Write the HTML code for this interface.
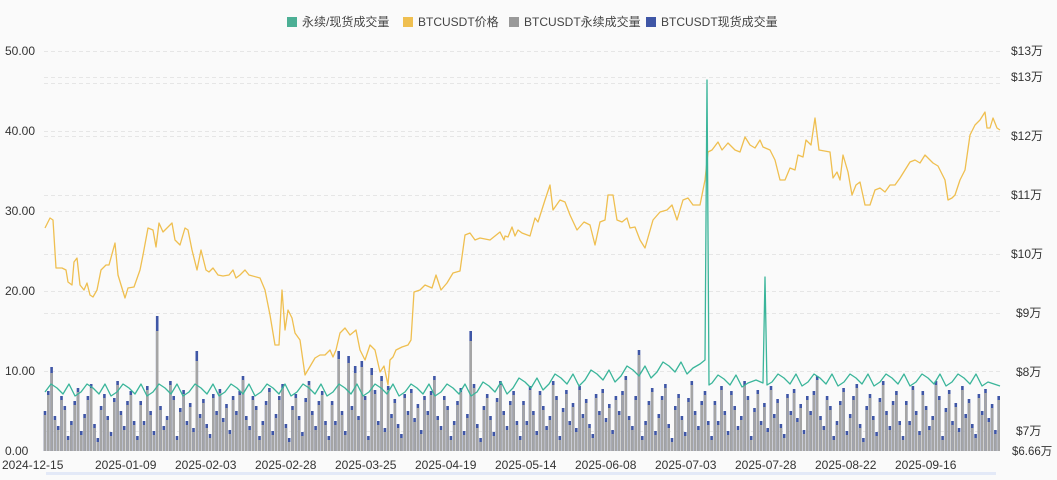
<!DOCTYPE html>
<html><head><meta charset="utf-8"><style>
html,body{margin:0;padding:0;background:#fafafa;}
body{width:1057px;height:475px;overflow:hidden;}
svg text{font-family:"Liberation Sans","Noto Sans CJK SC",sans-serif;}
</style></head><body>
<svg width="1057" height="475" xmlns="http://www.w3.org/2000/svg">
<rect width="1057" height="475" fill="#fafafa"/>
<g stroke="#e6e6e6" stroke-dasharray="4,3" stroke-width="1">
<line x1="44" x2="1002" y1="51.5" y2="51.5"/><line x1="44" x2="1002" y1="77.5" y2="77.5"/><line x1="44" x2="1002" y1="83.5" y2="83.5"/>
<line x1="44" x2="1002" y1="131.5" y2="131.5"/><line x1="44" x2="1002" y1="136.5" y2="136.5"/><line x1="44" x2="1002" y1="195.5" y2="195.5"/>
<line x1="44" x2="1002" y1="211.5" y2="211.5"/><line x1="44" x2="1002" y1="254.5" y2="254.5"/><line x1="44" x2="1002" y1="291.5" y2="291.5"/>
<line x1="44" x2="1002" y1="313.5" y2="313.5"/><line x1="44" x2="1002" y1="371.5" y2="371.5"/><line x1="44" x2="1002" y1="431.5" y2="431.5"/>
</g>
<path fill="none" stroke="#3f56a6" stroke-width="2.6" d="M45,451 v-40 m3.3,40 v-60 m3.3,60 v-84 m3.3,84 v-35 m3.3,35 v-25 m3.3,25 v-55 m3.3,55 v-45 m3.3,45 v-15 m3.3,15 v-30 m3.3,30 v-50 m3.3,50 v-63 m3.3,63 v-20 m3.3,20 v-37 m3.3,37 v-55 m3.3,55 v-67 m3.3,67 v-27 m3.3,27 v-13 m3.3,13 v-45 m3.3,45 v-57 m3.3,57 v-35 m3.3,35 v-19 m3.3,19 v-53 m3.3,53 v-70 m3.3,70 v-40 m3.3,40 v-25 m3.3,25 v-50 m3.3,50 v-60 m3.3,60 v-30 m3.3,30 v-15 m3.3,15
v-50 m3.3,50 v-30 m3.3,30 v-65 m3.3,65 v-40 m3.3,40 v-20 m3.3,20 v-135 m3.3,135 v-45 m3.3,45 v-25 m3.3,25 v-35 m3.3,35 v-70 m3.3,70 v-55 m3.3,55 v-15 m3.3,15 v-43 m3.3,43 v-61 m3.3,61 v-30 m3.3,30 v-48 m3.3,48 v-23 m3.3,23 v-100 m3.3,100 v-37 m3.3,37 v-52 m3.3,52 v-27 m3.3,27 v-17 m3.3,17 v-57 m3.3,57 v-40 m3.3,40 v-62 m3.3,62 v-33 m3.3,33 v-47 m3.3,47 v-21 m3.3,21 v-55 m3.3,55
v-40 m3.3,40 v-60 m3.3,60 v-75 m3.3,75 v-35 m3.3,35 v-25 m3.3,25 v-55 m3.3,55 v-45 m3.3,45 v-15 m3.3,15 v-30 m3.3,30 v-50 m3.3,50 v-63 m3.3,63 v-20 m3.3,20 v-37 m3.3,37 v-55 m3.3,55 v-67 m3.3,67 v-27 m3.3,27 v-13 m3.3,13 v-45 m3.3,45 v-57 m3.3,57 v-35 m3.3,35 v-19 m3.3,19 v-53 m3.3,53 v-70 m3.3,70 v-40 m3.3,40 v-25 m3.3,25 v-50 m3.3,50 v-60 m3.3,60 v-30 m3.3,30 v-15 m3.3,15
v-50 m3.3,50 v-30 m3.3,30 v-100 m3.3,100 v-40 m3.3,40 v-20 m3.3,20 v-95 m3.3,95 v-45 m3.3,45 v-85 m3.3,85 v-35 m3.3,35 v-90 m3.3,90 v-55 m3.3,55 v-15 m3.3,15 v-83 m3.3,83 v-61 m3.3,61 v-30 m3.3,30 v-75 m3.3,75 v-23 m3.3,23 v-65 m3.3,65 v-37 m3.3,37 v-52 m3.3,52 v-27 m3.3,27 v-17 m3.3,17 v-57 m3.3,57 v-40 m3.3,40 v-62 m3.3,62 v-33 m3.3,33 v-47 m3.3,47 v-21 m3.3,21 v-55 m3.3,55
v-40 m3.3,40 v-60 m3.3,60 v-75 m3.3,75 v-35 m3.3,35 v-25 m3.3,25 v-55 m3.3,55 v-45 m3.3,45 v-15 m3.3,15 v-30 m3.3,30 v-50 m3.3,50 v-63 m3.3,63 v-20 m3.3,20 v-37 m3.3,37 v-120 m3.3,120 v-67 m3.3,67 v-27 m3.3,27 v-13 m3.3,13 v-45 m3.3,45 v-57 m3.3,57 v-35 m3.3,35 v-19 m3.3,19 v-53 m3.3,53 v-70 m3.3,70 v-40 m3.3,40 v-25 m3.3,25 v-50 m3.3,50 v-60 m3.3,60 v-30 m3.3,30 v-15 m3.3,15
v-50 m3.3,50 v-30 m3.3,30 v-65 m3.3,65 v-40 m3.3,40 v-20 m3.3,20 v-60 m3.3,60 v-45 m3.3,45 v-25 m3.3,25 v-35 m3.3,35 v-70 m3.3,70 v-55 m3.3,55 v-15 m3.3,15 v-43 m3.3,43 v-61 m3.3,61 v-30 m3.3,30 v-48 m3.3,48 v-23 m3.3,23 v-65 m3.3,65 v-37 m3.3,37 v-52 m3.3,52 v-27 m3.3,27 v-17 m3.3,17 v-57 m3.3,57 v-40 m3.3,40 v-62 m3.3,62 v-33 m3.3,33 v-47 m3.3,47 v-21 m3.3,21 v-55 m3.3,55
v-40 m3.3,40 v-60 m3.3,60 v-75 m3.3,75 v-35 m3.3,35 v-25 m3.3,25 v-55 m3.3,55 v-101 m3.3,101 v-15 m3.3,15 v-30 m3.3,30 v-50 m3.3,50 v-63 m3.3,63 v-20 m3.3,20 v-37 m3.3,37 v-55 m3.3,55 v-67 m3.3,67 v-27 m3.3,27 v-13 m3.3,13 v-45 m3.3,45 v-57 m3.3,57 v-35 m3.3,35 v-19 m3.3,19 v-53 m3.3,53 v-70 m3.3,70 v-40 m3.3,40 v-25 m3.3,25 v-50 m3.3,50 v-60 m3.3,60 v-30 m3.3,30 v-15 m3.3,15
v-50 m3.3,50 v-30 m3.3,30 v-65 m3.3,65 v-40 m3.3,40 v-20 m3.3,20 v-60 m3.3,60 v-45 m3.3,45 v-25 m3.3,25 v-35 m3.3,35 v-70 m3.3,70 v-55 m3.3,55 v-15 m3.3,15 v-43 m3.3,43 v-61 m3.3,61 v-30 m3.3,30 v-48 m3.3,48 v-23 m3.3,23 v-65 m3.3,65 v-37 m3.3,37 v-52 m3.3,52 v-27 m3.3,27 v-17 m3.3,17 v-57 m3.3,57 v-40 m3.3,40 v-62 m3.3,62 v-33 m3.3,33 v-47 m3.3,47 v-21 m3.3,21 v-55 m3.3,55
v-40 m3.3,40 v-60 m3.3,60 v-75 m3.3,75 v-35 m3.3,35 v-25 m3.3,25 v-55 m3.3,55 v-45 m3.3,45 v-15 m3.3,15 v-30 m3.3,30 v-50 m3.3,50 v-63 m3.3,63 v-20 m3.3,20 v-37 m3.3,37 v-55 m3.3,55 v-67 m3.3,67 v-27 m3.3,27 v-13 m3.3,13 v-45 m3.3,45 v-57 m3.3,57 v-35 m3.3,35 v-19 m3.3,19 v-53 m3.3,53 v-70 m3.3,70 v-40 m3.3,40 v-25 m3.3,25 v-50 m3.3,50 v-60 m3.3,60 v-30 m3.3,30 v-15 m3.3,15
v-50 m3.3,50 v-30 m3.3,30 v-65 m3.3,65 v-40 m3.3,40 v-20 m3.3,20 v-60 m3.3,60 v-45 m3.3,45 v-25 m3.3,25 v-35 m3.3,35 v-70 m3.3,70 v-55 m3.3,55 v-15 m3.3,15 v-43 m3.3,43 v-61 m3.3,61 v-30 m3.3,30 v-48 m3.3,48 v-23 m3.3,23 v-65 m3.3,65 v-37 m3.3,37 v-52 m3.3,52 v-27 m3.3,27 v-17 m3.3,17 v-57 m3.3,57 v-40 m3.3,40 v-62 m3.3,62 v-33 m3.3,33 v-47 m3.3,47 v-21 m3.3,21 v-55 m3.3,55"/>
<path fill="none" stroke="#a5a5a5" stroke-width="2.6" d="M45,451 v-36 m3.3,36 v-56 m3.3,56 v-78 m3.3,78 v-31 m3.3,31 v-21 m3.3,21 v-51 m3.3,51 v-41 m3.3,41 v-11 m3.3,11 v-26 m3.3,26 v-46 m3.3,46 v-59 m3.3,59 v-16 m3.3,16 v-33 m3.3,33 v-51 m3.3,51 v-63 m3.3,63 v-23 m3.3,23 v-9 m3.3,9 v-41 m3.3,41 v-53 m3.3,53 v-31 m3.3,31 v-15 m3.3,15 v-49 m3.3,49 v-66 m3.3,66 v-36 m3.3,36 v-21 m3.3,21 v-46 m3.3,46 v-56 m3.3,56 v-26 m3.3,26 v-11 m3.3,11
v-46 m3.3,46 v-26 m3.3,26 v-61 m3.3,61 v-36 m3.3,36 v-16 m3.3,16 v-120 m3.3,120 v-41 m3.3,41 v-21 m3.3,21 v-31 m3.3,31 v-66 m3.3,66 v-51 m3.3,51 v-11 m3.3,11 v-39 m3.3,39 v-57 m3.3,57 v-26 m3.3,26 v-44 m3.3,44 v-19 m3.3,19 v-90 m3.3,90 v-33 m3.3,33 v-48 m3.3,48 v-23 m3.3,23 v-13 m3.3,13 v-53 m3.3,53 v-36 m3.3,36 v-58 m3.3,58 v-29 m3.3,29 v-43 m3.3,43 v-17 m3.3,17 v-51 m3.3,51
v-36 m3.3,36 v-56 m3.3,56 v-71 m3.3,71 v-31 m3.3,31 v-21 m3.3,21 v-51 m3.3,51 v-41 m3.3,41 v-11 m3.3,11 v-26 m3.3,26 v-46 m3.3,46 v-59 m3.3,59 v-16 m3.3,16 v-33 m3.3,33 v-51 m3.3,51 v-63 m3.3,63 v-23 m3.3,23 v-9 m3.3,9 v-41 m3.3,41 v-53 m3.3,53 v-31 m3.3,31 v-15 m3.3,15 v-49 m3.3,49 v-66 m3.3,66 v-36 m3.3,36 v-21 m3.3,21 v-46 m3.3,46 v-56 m3.3,56 v-26 m3.3,26 v-11 m3.3,11
v-46 m3.3,46 v-26 m3.3,26 v-92 m3.3,92 v-36 m3.3,36 v-16 m3.3,16 v-88 m3.3,88 v-41 m3.3,41 v-78 m3.3,78 v-31 m3.3,31 v-84 m3.3,84 v-51 m3.3,51 v-11 m3.3,11 v-76 m3.3,76 v-57 m3.3,57 v-26 m3.3,26 v-70 m3.3,70 v-19 m3.3,19 v-61 m3.3,61 v-33 m3.3,33 v-48 m3.3,48 v-23 m3.3,23 v-13 m3.3,13 v-53 m3.3,53 v-36 m3.3,36 v-58 m3.3,58 v-29 m3.3,29 v-43 m3.3,43 v-17 m3.3,17 v-51 m3.3,51
v-36 m3.3,36 v-56 m3.3,56 v-71 m3.3,71 v-31 m3.3,31 v-21 m3.3,21 v-51 m3.3,51 v-41 m3.3,41 v-11 m3.3,11 v-26 m3.3,26 v-46 m3.3,46 v-59 m3.3,59 v-16 m3.3,16 v-33 m3.3,33 v-110 m3.3,110 v-63 m3.3,63 v-23 m3.3,23 v-9 m3.3,9 v-41 m3.3,41 v-53 m3.3,53 v-31 m3.3,31 v-15 m3.3,15 v-49 m3.3,49 v-66 m3.3,66 v-36 m3.3,36 v-21 m3.3,21 v-46 m3.3,46 v-56 m3.3,56 v-26 m3.3,26 v-11 m3.3,11
v-46 m3.3,46 v-26 m3.3,26 v-61 m3.3,61 v-36 m3.3,36 v-16 m3.3,16 v-56 m3.3,56 v-41 m3.3,41 v-21 m3.3,21 v-31 m3.3,31 v-66 m3.3,66 v-51 m3.3,51 v-11 m3.3,11 v-39 m3.3,39 v-57 m3.3,57 v-26 m3.3,26 v-44 m3.3,44 v-19 m3.3,19 v-61 m3.3,61 v-33 m3.3,33 v-48 m3.3,48 v-23 m3.3,23 v-13 m3.3,13 v-53 m3.3,53 v-36 m3.3,36 v-58 m3.3,58 v-29 m3.3,29 v-43 m3.3,43 v-17 m3.3,17 v-51 m3.3,51
v-36 m3.3,36 v-56 m3.3,56 v-71 m3.3,71 v-31 m3.3,31 v-21 m3.3,21 v-51 m3.3,51 v-96 m3.3,96 v-11 m3.3,11 v-26 m3.3,26 v-46 m3.3,46 v-59 m3.3,59 v-16 m3.3,16 v-33 m3.3,33 v-51 m3.3,51 v-63 m3.3,63 v-23 m3.3,23 v-9 m3.3,9 v-41 m3.3,41 v-53 m3.3,53 v-31 m3.3,31 v-15 m3.3,15 v-49 m3.3,49 v-66 m3.3,66 v-36 m3.3,36 v-21 m3.3,21 v-46 m3.3,46 v-56 m3.3,56 v-26 m3.3,26 v-11 m3.3,11
v-46 m3.3,46 v-26 m3.3,26 v-61 m3.3,61 v-36 m3.3,36 v-16 m3.3,16 v-56 m3.3,56 v-41 m3.3,41 v-21 m3.3,21 v-31 m3.3,31 v-66 m3.3,66 v-51 m3.3,51 v-11 m3.3,11 v-39 m3.3,39 v-57 m3.3,57 v-26 m3.3,26 v-44 m3.3,44 v-19 m3.3,19 v-61 m3.3,61 v-33 m3.3,33 v-48 m3.3,48 v-23 m3.3,23 v-13 m3.3,13 v-53 m3.3,53 v-36 m3.3,36 v-58 m3.3,58 v-29 m3.3,29 v-43 m3.3,43 v-17 m3.3,17 v-51 m3.3,51
v-36 m3.3,36 v-56 m3.3,56 v-71 m3.3,71 v-31 m3.3,31 v-21 m3.3,21 v-51 m3.3,51 v-41 m3.3,41 v-11 m3.3,11 v-26 m3.3,26 v-46 m3.3,46 v-59 m3.3,59 v-16 m3.3,16 v-33 m3.3,33 v-51 m3.3,51 v-63 m3.3,63 v-23 m3.3,23 v-9 m3.3,9 v-41 m3.3,41 v-53 m3.3,53 v-31 m3.3,31 v-15 m3.3,15 v-49 m3.3,49 v-66 m3.3,66 v-36 m3.3,36 v-21 m3.3,21 v-46 m3.3,46 v-56 m3.3,56 v-26 m3.3,26 v-11 m3.3,11
v-46 m3.3,46 v-26 m3.3,26 v-61 m3.3,61 v-36 m3.3,36 v-16 m3.3,16 v-56 m3.3,56 v-41 m3.3,41 v-21 m3.3,21 v-31 m3.3,31 v-66 m3.3,66 v-51 m3.3,51 v-11 m3.3,11 v-39 m3.3,39 v-57 m3.3,57 v-26 m3.3,26 v-44 m3.3,44 v-19 m3.3,19 v-61 m3.3,61 v-33 m3.3,33 v-48 m3.3,48 v-23 m3.3,23 v-13 m3.3,13 v-53 m3.3,53 v-36 m3.3,36 v-58 m3.3,58 v-29 m3.3,29 v-43 m3.3,43 v-17 m3.3,17 v-51 m3.3,51"/>
<path fill="none" stroke="#efbf50" stroke-width="1.3" stroke-linejoin="round" d="M45,228 L50,218 L53,220 L56,268 L62,268 L66,270 L68,282 L72,285 L74,262 L77,258 L80,285 L84,290 L87,283 L90,295 L93,297 L97,290 L101,270 L106,265 L109,265 L115,243 L118,275 L125,298 L128,288 L134,287 L140,270 L143,255 L148,228 L153,230 L156,247 L159,223 L163,232 L167,228 L172,223 L175,240 L180,245 L185,228 L188,230 L192,250 L197,270 L201,250 L206,270 L209,272 L213,268 L218,275 L223,276 L229,275 L233,270 L236,278 L240,275 L245,270 L249,275 L260,278 L265,290 L270,315 L275,345 L279,345 L282,290 L285,330 L288,310 L292,318 L295,333 L300,340 L305,375 L315,358 L320,355 L325,355 L330,350 L333,357 L336,350 L340,333 L345,328 L350,335 L356,330 L360,350 L365,360 L370,345 L375,350 L380,372 L384,366 L388,385 L390,360 L393,357 L396,350 L402,347 L408,345 L411,340 L414,292 L420,290 L425,285 L432,288 L436,275 L441,290 L447,283 L453,273 L460,271 L465,235 L470,233 L475,240 L480,238 L490,240 L500,232 L504,240 L505,236 L508,237 L512,227 L515,236 L518,230 L522,233 L530,236 L535,218 L538,222 L545,200 L550,185 L553,210 L560,200 L565,202 L570,215 L577,230 L584,222 L590,225 L595,245 L600,222 L605,220 L608,195 L613,195 L617,220 L622,222 L627,218 L630,228 L635,227 L640,240 L645,248 L653,220 L660,212 L667,210 L672,205 L677,220 L683,200 L688,198 L693,205 L700,205 L705,180 L708,152 L712,150 L718,142 L722,150 L728,143 L735,150 L740,152 L745,137 L750,145 L755,148 L760,140 L763,147 L770,150 L775,160 L780,180 L785,180 L790,168 L795,170 L798,155 L803,157 L806,140 L811,145 L815,118 L819,150 L830,152 L833,178 L837,172 L840,180 L843,155 L848,172 L852,195 L856,185 L860,182 L865,205 L870,205 L875,190 L880,188 L885,192 L890,185 L895,185 L900,178 L905,170 L910,162 L915,160 L920,163 L925,155 L930,160 L933,163 L938,166 L945,180 L948,200 L952,198 L955,195 L960,180 L965,170 L970,135 L975,125 L980,120 L985,112 L987,128 L990,128 L993,118 L997,128 L1000,130"/>
<path fill="none" stroke="#3ab59a" stroke-width="1.3" stroke-linejoin="round" d="M45,392 l6,-8 l6,4 l6,6 l6,-10 l6,12 l6,-4 l6,-8 l6,4 l6,6 l6,-10 l6,12 l6,-4 l6,-8 l6,4 l6,6 l6,-10 l6,12 l6,-4 l6,-8 l6,4 l6,6 l6,-10 l6,12 l6,-4 l6,-8 l6,4 l6,6 l6,-10 l6,12 l6,-4 l6,-8 l6,4 l6,6 l6,-10 l6,12 l6,-4 l6,-8 l6,4 l6,6 l6,-10 l6,12 l6,-4 l6,-8 l6,4 l6,6 l6,-10 l6,12 l6,-4 l6,-8 l6,4 l6,6 l6,-10 l6,12 l6,-4 l6,-8 l6,4 l6,6 l6,-10 l6,12 l6,-4 l6,-8 l6,4 l6,6 l6,-10 l6,12 l6,-4 l6,-8 l6,4 l6,6 l6,-10 l6,12 l6,-4 l6,-10 l6,4 l6,6 l6,-10 l6,12 l6,-6 l6,-10 l6,4 l6,6 l6,-10 l6,12 l6,-6 l6,-10 l6,4 l6,6 l6,-10 l6,12 l6,-6 l6,-10 l6,4 l6,6 l6,-10 l6,12 l6,-6 l6,-10 l6,4 l6,6 l6,-10 l6,12 l6,-6 l6,-10 l6,4 l6,6 l6,-10 l6,12 l6,-6 L700,364 L705,360 L707,80 L709,385 L712,383 l6,-8 l6,4 l6,6 l6,-10 l6,12 l6,-4 L756,380 L763,383 L765,277 L767,385 L772,382 l6,-8 l6,4 l6,6 l6,-10 l6,12 l6,-4 l6,-8 l6,4 l6,6 l6,-10 l6,12 l6,-4 l6,-8 l6,4 l6,6 l6,-10 l6,12 l6,-4 l6,-8 l6,4 l6,6 l6,-10 l6,12 l6,-4 l6,-8 l6,4 l6,6 l6,-10 l6,12 l6,-4 l6,-8 l6,4 l6,6 l6,-10 l6,12 l6,-4 L1000,386"/>
<g font-size="12" fill="#333">
<text x="5" y="55">50.00</text><text x="5" y="135">40.00</text><text x="5" y="215">30.00</text>
<text x="5" y="295">20.00</text><text x="5" y="375">10.00</text><text x="5" y="455">0.00</text>
<text x="1011" y="55">$13万</text><text x="1011" y="81">$13万</text><text x="1011" y="140">$12万</text>
<text x="1011" y="199">$11万</text><text x="1011" y="258">$10万</text><text x="1016" y="317">$9万</text>
<text x="1016" y="376">$8万</text><text x="1016" y="435">$7万</text><text x="1012" y="455" font-size="11.5">$6.66万</text>
<text x="2" y="469">2024-12-15</text><text x="95" y="469">2025-01-09</text><text x="175" y="469">2025-02-03</text>
<text x="255" y="469">2025-02-28</text><text x="335" y="469">2025-03-25</text><text x="415" y="469">2025-04-19</text>
<text x="495" y="469">2025-05-14</text><text x="575" y="469">2025-06-08</text><text x="655" y="469">2025-07-03</text>
<text x="735" y="469">2025-07-28</text><text x="815" y="469">2025-08-22</text><text x="895" y="469">2025-09-16</text>
</g>
<rect x="46" y="472" width="950" height="3" fill="#e3e9f7"/>
<g font-size="12" fill="#444">
<rect x="287" y="17" width="10" height="10" fill="#4caf95"/><text x="302" y="26">永续/现货成交量</text>
<rect x="403" y="17" width="10" height="10" fill="#efbf50"/><text x="418" y="26">BTCUSDT价格</text>
<rect x="509" y="17" width="10" height="10" fill="#999"/><text x="524" y="26">BTCUSDT永续成交量</text>
<rect x="646" y="17" width="10" height="10" fill="#3f56a6"/><text x="661" y="26">BTCUSDT现货成交量</text>
</g>
</svg>
</body></html>
